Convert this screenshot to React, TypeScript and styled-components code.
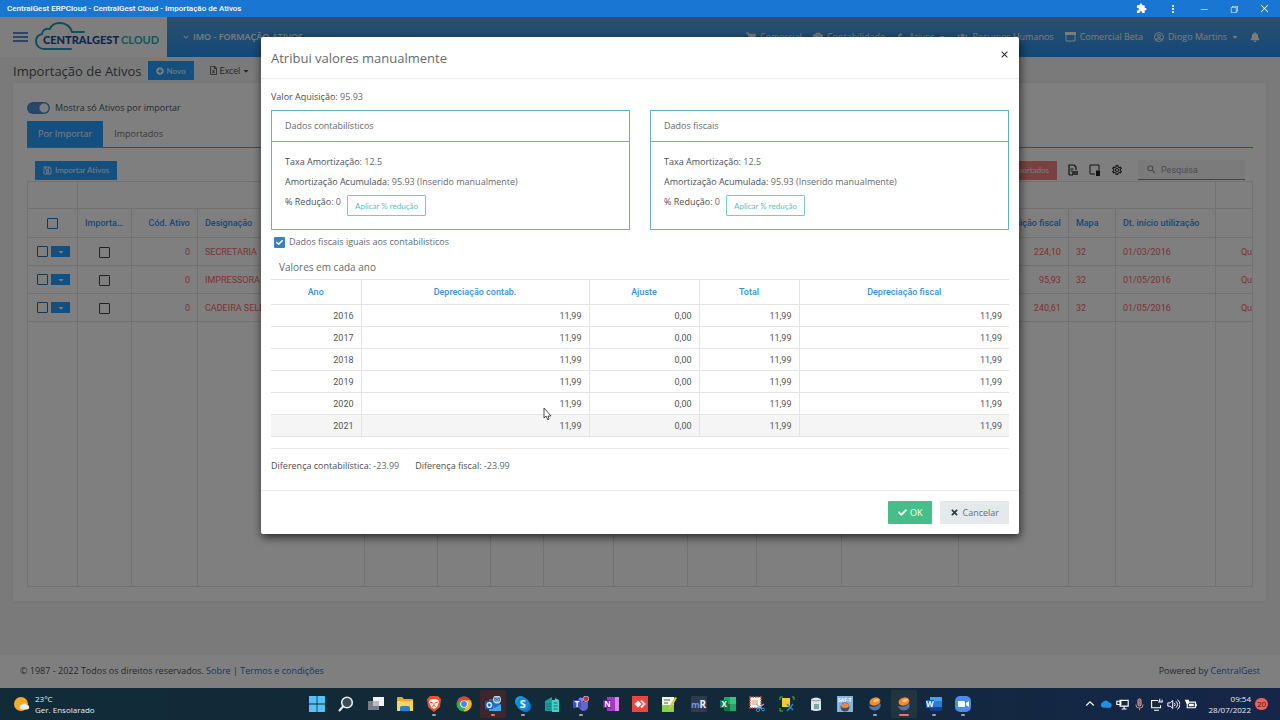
import React from "react";
import styled, { createGlobalStyle, css } from "styled-components";
import {
  FaBell, FaBriefcase, FaCaretDown, FaCheck, FaDollarSign, FaPlusCircle, FaRegFileExcel,
  FaRegSave, FaRegUserCircle, FaShoppingCart, FaTimes, FaUsers,
} from "react-icons/fa";
import { MdClose, MdExtension, MdMoreVert, MdOutlineSettings, MdSearch, MdExpandMore } from "react-icons/md";
import { VscChromeClose, VscChromeMinimize, VscChromeRestore } from "react-icons/vsc";

const brand = "'Open Sans', 'Noto Sans', sans-serif";
const compact = "Lato, 'Liberation Sans', sans-serif";
const grid = "Roboto, 'Liberation Sans', sans-serif";
const system = "'Open Sans', 'Noto Sans', sans-serif";

const Global = createGlobalStyle`
  *, *::before, *::after { box-sizing: border-box; }
  body { margin: 0; font: 400 9px/14px ${brand}; color: #4d5459; }
  button, input { font: inherit; margin: 0; }
  button { cursor: pointer; }
  a { text-decoration: none; }
  svg { display: block; flex: none; }
`;

const Desktop = styled.div`
  min-height: 100vh;
  display: flex;
  flex-direction: column;
`;

/* ---------- window title bar ---------- */
const TitleBar = styled.header`
  height: 17px;
  padding: 0 10px 0 7px;
  display: flex;
  align-items: center;
  justify-content: space-between;
  background: #1976d2;
  color: #fff;
  font: 500 8px/14px ${grid};
`;
const WindowButtons = styled.div`
  display: flex;
  align-items: center;
  gap: 20px;
`;
const PlainButton = styled.button`
  border: 0;
  padding: 0;
  background: none;
  color: inherit;
  display: flex;
  align-items: center;
  gap: 2px;
`;

/* ---------- application ---------- */
const WebArea = styled.div`
  position: relative;
  flex: 1;
  display: flex;
  flex-direction: column;
  background: #f5f5f5;
`;
const AppHeader = styled.header`
  height: 40px;
  display: flex;
  color: #f4f8fc;
`;
const BrandArea = styled.div`
  width: 167px;
  padding: 0 0 0 13px;
  display: flex;
  align-items: center;
  gap: 7px;
  background: #fdfdfd;
  color: #2465a8;
`;
const NavBar = styled.nav`
  flex: 1;
  padding: 0 20px 0 14px;
  display: flex;
  align-items: center;
  justify-content: space-between;
  background: linear-gradient(#5c9fdc, #2492f0);
`;
const Company = styled(PlainButton)`
  font-weight: 600;
`;
const NavLinks = styled.div`
  display: flex;
  align-items: center;
  gap: 11px;
`;
const NavLink = styled.a`
  display: flex;
  align-items: center;
  gap: 4px;
  color: inherit;
  white-space: nowrap;
`;
const Content = styled.main`
  flex: 1;
  padding: 1px 14px 0 13px;
`;
const PageHead = styled.div`
  display: flex;
  align-items: center;
  gap: 6px;
  height: 25px;
`;
const PageTitle = styled.h1`
  margin: 0;
  font-size: 13px;
  line-height: 20px;
  font-weight: 400;
`;
const BlueButton = styled.button<{ $tone?: string }>`
  height: 19px;
  padding: 0 8px;
  border: 0;
  display: inline-flex;
  align-items: center;
  gap: 3px;
  background: ${(p) => p.$tone ?? "#26a0ff"};
  color: #f4f8fc;
  font-family: ${compact};
  font-size: 8px;
`;
const ExcelButton = styled(PlainButton)`
  margin-left: 9px;
  font-family: ${compact};
`;
const Card = styled.section`
  padding: 18px 13px 14px 14px;
  background: #fff;
  box-shadow: 0 0 6px rgba(0, 0, 0, 0.06);
`;
const SwitchLabel = styled.label`
  display: flex;
  align-items: center;
  gap: 5px;
`;
const Switch = styled.input`
  appearance: none;
  width: 23px;
  height: 12px;
  border-radius: 6px;
  background: radial-gradient(circle at 17px 6px, #fff 4px, #4c8cd8 5px);
`;
const Tabs = styled.div`
  margin-top: 6px;
  display: flex;
  border-bottom: 1px solid #50a4ea;
`;
const Tab = styled.button<{ $active?: boolean }>`
  height: 26px;
  padding: 0 11px;
  border: 0;
  background: ${(p) => (p.$active ? "#26a0ff" : "transparent")};
  color: ${(p) => (p.$active ? "#f4f8fc" : "#70767a")};
`;
const GridTools = styled.div`
  margin-top: 11px;
  padding: 0 8px;
  display: flex;
  align-items: center;
  justify-content: space-between;
  height: 22px;
  color: #202020;
`;
const ToolGroup = styled.div`
  display: flex;
  align-items: center;
  gap: 10px;
`;
const Search = styled.label`
  width: 107px;
  height: 20px;
  margin-left: 5px;
  padding: 0 8px;
  display: flex;
  align-items: center;
  gap: 4px;
  background: #f7f7f7;
  border-bottom: 1px solid #888;
  color: #777;
  input {
    min-width: 0;
    width: 100%;
    border: 0;
    padding: 0;
    background: none;
    font-family: ${grid};
  }
  input::placeholder { color: #999; opacity: 1; }
`;
const AssetTable = styled.table`
  width: 100%;
  table-layout: fixed;
  border-collapse: collapse;
  border: 1px solid #e4e4e4;
  font: 400 9px/12px ${grid};
  color: #ff6464;
  th, td {
    height: 28px;
    padding: 0 7px;
    border: 1px solid #e4e4e4;
    overflow: hidden;
    white-space: nowrap;
    text-align: left;
  }
  th { height: 29px; color: #3c8ee4; font-weight: 500; }
  thead tr:first-child th { height: 27px; }
  tbody tr:last-child td { height: 265px; }
`;
const AssetCell = styled.td<{ $align?: string }>`
  && { text-align: ${(p) => p.$align ?? "left"}; }
`;
const QuotaCell = styled.td`
  && { padding: 0 0 0 25px; }
`;
const AssetHead = styled.th<{ $align?: string }>`
  && { text-align: ${(p) => p.$align ?? "left"}; text-overflow: ellipsis; }
`;
const Tick = styled.input<{ $tone?: string }>`
  appearance: none;
  width: 11px;
  height: 11px;
  border: 1px solid ${(p) => p.$tone ?? "#444"};
  border-radius: 1px;
  vertical-align: middle;
`;
const RowActions = styled.div`
  display: flex;
  align-items: center;
  justify-content: flex-end;
  gap: 3px;
`;
const DropButton = styled(BlueButton)`
  width: 19px;
  height: 11px;
  padding: 0;
  justify-content: center;
`;
const AppFooter = styled.footer`
  height: 33px;
  padding: 0 20px 2px;
  display: flex;
  align-items: center;
  justify-content: space-between;
  background: #fff;
  a { color: #2f6fc0; }
`;

/* ---------- dialog ---------- */
const Backdrop = styled.div`
  position: absolute;
  inset: 0;
  padding-top: 20px;
  display: flex;
  align-items: flex-start;
  justify-content: center;
  background: rgba(0, 0, 0, 0.5);
`;
const Dialog = styled.section`
  position: relative;
  width: 100%;
  max-width: 758px;
  background: #fff;
  border-radius: 2px;
  box-shadow: 1px 3px 10px rgba(0, 0, 0, 0.7);
  color: #646a6e;
`;
const DialogHead = styled.div`
  height: 42px;
  padding: 0 10px;
  display: flex;
  align-items: center;
  justify-content: space-between;
  border-bottom: 1px solid #ececec;
`;
const DialogTitle = styled.h2`
  margin: 0;
  font-size: 13px;
  line-height: 20px;
  font-weight: 400;
`;
const CloseButton = styled(PlainButton)`
  align-self: flex-start;
  margin: 12px -1px 0 0;
  color: #222;
`;
const DialogBody = styled.div`
  padding: 11px 10px 17px;
`;
const Line = styled.p`
  margin: 0;
  line-height: 14px;
  b { font-weight: 500; color: #4a5054; }
`;
const Panels = styled.div`
  margin-top: 6px;
  display: grid;
  grid-template-columns: 1fr 1fr;
  gap: 20px;
`;
const Panel = styled.section`
  height: 120px;
  border: 1px solid #62b3bd;
`;
const PanelTitle = styled.h3`
  margin: 0;
  height: 31px;
  padding: 0 13px;
  border-bottom: 1px solid #62b3bd;
  font-size: 9px;
  line-height: 30px;
  font-weight: 400;
`;
const PanelBody = styled.div`
  padding: 13px;
  display: grid;
  gap: 6px;
`;
const Reduction = styled.div`
  display: flex;
  gap: 6px;
`;
const OutlineButton = styled.button`
  height: 21px;
  padding: 0 7px;
  border: 1px solid #7cc7cc;
  border-radius: 1px;
  background: #fff;
  color: #62bcc2;
  font-family: ${compact};
  font-size: 8px;
  line-height: 12px;
`;
const SameLabel = styled.label`
  margin: 5px 0 0 3px;
  display: flex;
  align-items: center;
  gap: 4px;
`;
const CheckedBox = styled.input`
  appearance: none;
  width: 11px;
  height: 11px;
  border-radius: 1px;
  background: #3b82c0;
`;
const CheckHolder = styled.span`
  display: grid;
  > * { grid-area: 1 / 1; place-self: center; }
  svg { color: #fff; pointer-events: none; }
`;
const SectionTitle = styled.h3`
  margin: 10px 0 4px 8px;
  font-size: 10px;
  line-height: 16px;
  font-weight: 400;
`;
const YearTable = styled.table`
  width: 100%;
  table-layout: fixed;
  border-collapse: collapse;
  font: 400 9px/12px ${grid};
  color: #555;
  th, td {
    height: 22px;
    padding: 0 7px;
    border: 1px solid #e4e4e4;
    text-align: right;
  }
  th:first-child, td:first-child { border-left: 0; }
  th:last-child, td:last-child { border-right: 0; }
  th { height: 25px; text-align: center; color: #3790d4; font-weight: 500; }
  tbody tr:last-child { background: #f5f5f5; }
`;
const Differences = styled.div`
  margin-top: 11px;
  padding-top: 10px;
  border-top: 1px solid #e9e9e9;
  display: flex;
  gap: 16px;
`;
const DialogFoot = styled.div`
  padding: 10px;
  display: flex;
  justify-content: flex-end;
  gap: 8px;
  border-top: 1px solid #ececec;
`;
const FootButton = styled.button<{ $primary?: boolean }>`
  height: 23px;
  padding: 0 10px;
  border: 0;
  border-radius: 1px;
  display: flex;
  align-items: center;
  gap: 3px;
  ${(p) =>
    p.$primary
      ? css`background: #46be8a; color: #fff;`
      : css`background: #e4e9ec; color: #6a7074; svg { color: #33383b; }`}
`;
const Pointer = styled.svg`
  position: absolute;
  left: 282px;
  top: 370px;
`;

/* ---------- task bar ---------- */
const TaskBar = styled.footer`
  height: 32px;
  display: grid;
  grid-template-columns: 1fr 672px 1fr;
  align-items: center;
  background: linear-gradient(90deg, #122b38, #122939 60%, #15264a);
  color: #e6edf2;
  font: 400 8px/11px ${system};
`;
const Weather = styled.div`
  padding-left: 14px;
  display: flex;
  align-items: center;
  gap: 5px;
`;
const TaskIcons = styled.nav`
  display: flex;
  justify-content: space-between;
`;
const TaskButton = styled.button<{ $tint?: string; $mark?: string }>`
  width: 26px;
  height: 28px;
  padding: 0 0 2px;
  border: 0;
  border-radius: 2px;
  background: ${(p) => p.$tint ?? "transparent"};
  display: flex;
  flex-direction: column;
  align-items: center;
  justify-content: flex-end;
  gap: 2px;
  &::after {
    content: "";
    width: ${(p) => (p.$mark === "#f0706c" ? "10px" : "4px")};
    height: 2px;
    border-radius: 1px;
    background: ${(p) => p.$mark ?? "transparent"};
  }
`;
const Tray = styled.div`
  padding-right: 12px;
  display: flex;
  align-items: center;
  justify-content: flex-end;
  gap: 4px;
`;
const Clock = styled.time`
  margin-left: 8px;
  text-align: right;
`;
const Badge = styled.span`
  width: 13px;
  height: 12px;
  border-radius: 6px;
  background: #f0605c;
  color: #3a1a1c;
  font-size: 8px;
  line-height: 12px;
  text-align: center;
`;

const Logo = () => (
  <svg width="126" height="30" viewBox="0 0 126 30" role="img" aria-label="CentralGest Cloud">
    <path
      d="M49 10H37C36 5 31 1 25 1c-6 0-9 3-10 6C10 6 7 9 7 12 3 13 1 16 1 19c0 5 4 8 8 8h27"
      fill="none" stroke="#1a9fb5" strokeWidth="2" strokeLinejoin="round" strokeLinecap="round"
    />
    <text x="8" y="22" fontFamily="Lato" fontWeight="700" fontSize="11" fill="#174a9c">
      <tspan fontWeight="900">CENTRALGEST</tspan><tspan x="86" fill="#22b0b4">CLOUD</tspan>
    </text>
  </svg>
);

const Svg = ({ children, size = 16 }: { children: React.ReactNode; size?: number }) => (
  <svg width={size} height={size} viewBox="0 0 16 16" aria-hidden="true">{children}</svg>
);
const letter = (t: string, x: number, y: number, s = 8, fill = "#fff") => (
  <text x={x} y={y} fontSize={s} fontWeight="700" fontFamily="Open Sans" fill={fill}>{t}</text>
);
const fox = (
  <>
    <circle cx="7.500" cy="9" r="6" fill="#26374f" />
    <path d="M2 10c1 4 6 6 10 3 2-2 2-4 1-6-2 3-6 5-11 3z" fill="#5574a4" />
    <ellipse cx="8" cy="5.500" rx="5.500" ry="4" transform="rotate(-15 8 5.500)" fill="#f08a30" />
    <ellipse cx="9" cy="4.500" rx="3" ry="1.500" transform="rotate(-15 9 4.500)" fill="#ffc27a" />
  </>
);

const taskItems: { name: string; art: React.ReactNode; tint?: string; mark?: string }[] = [
  { name: "Iniciar", art: <path d="M0 0h7.600v7.600H0zM8.400 0H16v7.600H8.400zM0 8.400h7.600V16H0zM8.400 8.400H16V16H8.400z" fill="#54c4f6" /> },
  { name: "Procurar", art: <><circle cx="9" cy="6.500" r="5.300" fill="#3a4c58" stroke="#e8eef2" strokeWidth="1.600" /><path d="M5 10.500L1.500 14.500" stroke="#e8eef2" strokeWidth="2" strokeLinecap="round" /></> },
  { name: "Vista de tarefas", art: <><path d="M0 5h11v9H0z" fill="#777e84" /><path d="M5 1h11v9H5z" fill="#f2f2f2" /><path d="M5 5h6v5H5z" fill="#b9bdc0" /></> },
  { name: "Explorador", art: <><path d="M0 2q0-1 1-1h4l2 2h8q1 0 1 1v11H0z" fill="#e9a92c" /><path d="M0 5h16v9q0 1-1 1H1q-1 0-1-1z" fill="#fdd45c" /><path d="M3 15v-3q0-2 2-2h6q2 0 2 2v3z" fill="#2b7fd0" /></> },
  { name: "Brave", mark: "#9aa5ad", art: <><path d="M4 0h8l3 3-1 8-6 5-6-5-1-8z" fill="#f0502c" /><path d="M4 4l2-1h4l2 1 1 2-2 5-3 2-3-2-2-5z" fill="#fff" /><path d="M4 6l3 1M12 6L9 7M8 7v3M6 10.500l2-1 2 1" fill="none" stroke="#f0502c" /></> },
  { name: "Chrome", art: <><circle cx="8" cy="8" r="7.500" fill="#36a852" /><path d="M8 8L1.500 4.200A7.500 7.500 0 0 1 14.500 4.200z" fill="#e94235" /><path d="M14.600 4.300A7.500 7.500 0 0 1 8 15.500L10.500 8V4.300z" fill="#fbbc05" /><circle cx="8" cy="8" r="3.800" fill="#fff" /><circle cx="8" cy="8" r="2.900" fill="#4285f4" /></> },
  { name: "Outlook", tint: "#40262b", mark: "#e07a72", art: <><path d="M4 3h11v12H4z" fill="#1c72c0" /><path d="M4 8l6 4 6-4v7H4z" fill="#43a8ea" /><path d="M0 5h8v8H0z" fill="#0f5cab" />{letter("O", 1, 12)}<circle cx="12" cy="3.500" r="4" fill="#bfe0f4" /><path d="M9.700 2h4.600v3H9.700zl2.300 2 2.300-2" fill="none" stroke="#1b4f7c" strokeWidth=".8" /></> },
  { name: "Skype", mark: "#9aa5ad", art: <><circle cx="5.500" cy="5.500" r="5.500" fill="#1a9be6" /><circle cx="10.500" cy="10.500" r="5.500" fill="#0a78cc" /><circle cx="8" cy="8" r="6.500" fill="#128ada" />{letter("S", 4.800, 12, 11)}</> },
  { name: "CentralGest", art: <><path d="M1 5l7-4v14H1z" fill="#17a3a0" /><path d="M8 4h3V2l4 2v12H8z" fill="#48d0c4" /><path d="M2 8h5M2 10.500h5M2 13h5M9.500 7h4M9.500 10h4M9.500 13h4" stroke="#136d78" /></> },
  { name: "Teams", mark: "#9aa5ad", art: <><circle cx="8" cy="4" r="2.500" fill="#7b83eb" /><path d="M6 6h9v5q-1 4-5 4-4-1-4-5z" fill="#6068c8" /><path d="M0 4h8v8H0z" fill="#464eb8" />{letter("T", 1.800, 11)}<circle cx="13" cy="2.800" r="2.800" fill="#c4314b" stroke="#e9e9e9" strokeWidth=".6" /></> },
  { name: "OneNote", art: <><path d="M4 1h12v14H4z" fill="#a43ac4" /><path d="M12 1h4v14h-4z" fill="#d58ae8" /><path d="M0 4h8v8H0z" fill="#7719aa" />{letter("N", 1.200, 11)}</> },
  { name: "AnyDesk", art: <><path d="M0 0h16v16H0z" fill="#ef443b" /><path d="M6 4.500L9.500 8 6 11.500 2.500 8z" fill="#fff" /><path d="M9 4.500L12.500 8 9 11.500" fill="none" stroke="#fff" strokeWidth="1.800" /></> },
  { name: "Notepad++", art: <><path d="M1 1h12v15H1z" fill="#f3f6e8" /><path d="M1 9h12v7H1z" fill="#8ad04a" /><path d="M3 4h6M3 7h4" stroke="#4a6a3a" /><path d="M8 11l6-10 2 1-6 10-2 1z" fill="#d7c83a" /></> },
  { name: "mRemote", art: <><path d="M0 0h16v16H0z" fill="#303a48" />{letter("m", 0, 11.500, 9, "#7c92e0")}{letter("R", 8.500, 11.500, 10, "#eef")}</> },
  { name: "Excel", art: <><path d="M4 1h12v14H4z" fill="#22a565" /><path d="M10 1h6v7h-6z" fill="#35c481" /><path d="M4 8h6v7H4z" fill="#17703f" /><path d="M0 4h8v8H0z" fill="#107c41" />{letter("X", 1.500, 11)}</> },
  { name: "Recortes", art: <><path d="M1 1h11v11H1z" fill="#f7f3f2" stroke="#d84b3c" strokeWidth="1.500" strokeDasharray="1.500 1" /><path d="M3 4h6v5H3z" fill="#e8c6c0" /><path d="M7 8l6 5M15 8l-6 4" stroke="#86b8d8" strokeWidth="1.200" /><circle cx="9" cy="14" r="1.600" fill="none" stroke="#3d94d0" /><circle cx="14" cy="13.500" r="1.400" fill="none" stroke="#3d94d0" /></> },
  { name: "Dados", art: <><path d="M3 2h8v9H3z" fill="#f6c934" /><path d="M1 4V1h3M13 1h2v3M1 12v3h3" fill="none" stroke="#58b04c" /><path d="M8 8l6 6M14 8l-6 7" stroke="#2f86cc" strokeWidth="1.500" /></> },
  { name: "Base de dados", art: <><path d="M3 3q5-3 10 0v11q-5 2-10 0z" fill="#dfe5e6" /><path d="M3 4q5 2 10 0" fill="none" stroke="#8a999e" /><path d="M6 8h5v5H6z" fill="#6fa9a8" /></> },
  { name: "SAF-T", art: <><path d="M0 0h16v16H0z" fill="#86b4de" />{letter("SAF-T", 1, 5.500, 5)}<circle cx="8" cy="11" r="4.500" fill="#3c506c" /><ellipse cx="8" cy="9.500" rx="4" ry="2.500" fill="#e88a44" /></> },
  { name: "ERP", mark: "#9aa5ad", art: fox },
  { name: "ERPCloud", tint: "#22343f", mark: "#f0706c", art: fox },
  { name: "Word", mark: "#9aa5ad", art: <><path d="M4 1h12v14H4z" fill="#2b7cd3" /><path d="M4 1h12v4H4z" fill="#41a5ee" /><path d="M4 11h12v4H4z" fill="#103f91" /><path d="M0 4h8v8H0z" fill="#185abd" />{letter("W", 0, 11)}</> },
  { name: "Zoom", mark: "#9aa5ad", art: <><rect width="16" height="16" rx="5" fill="#4a8cf0" /><path d="M3 5h6q1 0 1 1v5H4q-1 0-1-1zM11 7l3-2v6l-3-2z" fill="#fff" /></> },
];

const columns = [50, 54, 66, 167, 73, 53, 53, 70, 74, 69, 85, 117, 110, 47, 100, 37];
const assets = [
  ["SECRETARIA", "224,10", "01/03/2016"],
  ["IMPRESSORA", "95,93", "01/05/2016"],
  ["CADEIRA SELECT", "240,61", "01/05/2016"],
];
const blanks = (n: number) => Array.from({ length: n }, (_, i) => i);

const AssetsGrid = () => (
  <AssetTable>
    <colgroup>{columns.map((w, i) => <col key={i} width={`${(w / 1225) * 100}%`} />)}</colgroup>
    <thead>
      <tr><th /><th colSpan={14} /><th /></tr>
      <tr>
        <AssetHead $align="center"><Tick type="checkbox" aria-label="Selecionar todos" $tone="#2c6ca8" /></AssetHead>
        <AssetHead>Importado</AssetHead>
        <AssetHead $align="right">Cód. Ativo</AssetHead>
        <AssetHead>Designação</AssetHead>
        {blanks(8).map((i) => <th key={i} />)}
        <AssetHead $align="right">Aquisição fiscal</AssetHead>
        <AssetHead>Mapa</AssetHead>
        <AssetHead>Dt. início utilização</AssetHead>
        <th />
      </tr>
    </thead>
    <tbody>
      {assets.map(([name, value, date]) => (
        <tr key={name}>
          <td>
            <RowActions>
              <Tick type="checkbox" aria-label={`Selecionar ${name}`} $tone="#2c6ca8" />
              <DropButton aria-label={`Ações ${name}`}><FaCaretDown size={8} /></DropButton>
            </RowActions>
          </td>
          <AssetCell $align="center"><Tick type="checkbox" aria-label={`Importar ${name}`} /></AssetCell>
          <AssetCell $align="right">0</AssetCell>
          <td>{name}</td>
          {blanks(8).map((i) => <td key={i} />)}
          <AssetCell $align="right">{value}</AssetCell>
          <td>32</td>
          <td>{date}</td>
          <QuotaCell>Qu</QuotaCell>
        </tr>
      ))}
      <tr>{columns.map((_, i) => <td key={i} />)}</tr>
    </tbody>
  </AssetTable>
);

const DataPanel = ({ title }: { title: string }) => (
  <Panel>
    <PanelTitle>{title}</PanelTitle>
    <PanelBody>
      <Line><b>Taxa Amortização:</b> 12.5</Line>
      <Line><b>Amortização Acumulada:</b> 95.93 (Inserido manualmente)</Line>
      <Reduction>
        <Line><b>% Redução:</b> 0</Line>
        <OutlineButton>Aplicar % redução</OutlineButton>
      </Reduction>
    </PanelBody>
  </Panel>
);

const ValuesDialog = () => (
  <Dialog role="dialog" aria-labelledby="dialog-title">
    <DialogHead>
      <DialogTitle id="dialog-title">Atribui valores manualmente</DialogTitle>
      <CloseButton aria-label="Fechar"><MdClose size={11} /></CloseButton>
    </DialogHead>
    <DialogBody>
      <Line><b>Valor Aquisição:</b> 95.93</Line>
      <Panels>
        <DataPanel title="Dados contabilísticos" />
        <DataPanel title="Dados fiscais" />
      </Panels>
      <SameLabel>
        <CheckHolder>
          <CheckedBox type="checkbox" defaultChecked />
          <FaCheck size={7} />
        </CheckHolder>
        Dados fiscais iguais aos contabilisticos
      </SameLabel>
      <SectionTitle>Valores em cada ano</SectionTitle>
      <YearTable>
        <colgroup>{[90, 228, 110, 100, 210].map((w) => <col key={w} width={`${(w / 738) * 100}%`} />)}</colgroup>
        <thead>
          <tr><th>Ano</th><th>Depreciação contab.</th><th>Ajuste</th><th>Total</th><th>Depreciação fiscal</th></tr>
        </thead>
        <tbody>
          {[2016, 2017, 2018, 2019, 2020, 2021].map((year) => (
            <tr key={year}><td>{year}</td><td>11,99</td><td>0,00</td><td>11,99</td><td>11,99</td></tr>
          ))}
        </tbody>
      </YearTable>
      <Differences>
        <Line><b>Diferença contabilística:</b> -23.99</Line>
        <Line><b>Diferença fiscal:</b> -23.99</Line>
      </Differences>
    </DialogBody>
    <DialogFoot>
      <FootButton $primary><FaCheck size={9} />OK</FootButton>
      <FootButton><FaTimes size={9} />Cancelar</FootButton>
    </DialogFoot>
    <Pointer width="9" height="14" viewBox="0 0 9 14" aria-hidden="true">
      <path d="M1 1v10l2-2 2 4 1-1-1-3h3z" fill="#fff" stroke="#222" strokeWidth="0.800" />
    </Pointer>
  </Dialog>
);

export default function App() {
  return (
    <Desktop>
      <Global />
      <TitleBar>
        <span>CentralGest ERPCloud - CentralGest Cloud - Importação de Ativos</span>
        <WindowButtons>
          <PlainButton aria-label="Extensões"><MdExtension size={11} /></PlainButton>
          <PlainButton aria-label="Mais"><MdMoreVert size={12} /></PlainButton>
          <PlainButton aria-label="Minimizar"><VscChromeMinimize size={10} /></PlainButton>
          <PlainButton aria-label="Restaurar"><VscChromeRestore size={10} /></PlainButton>
          <PlainButton aria-label="Fechar janela"><VscChromeClose size={11} /></PlainButton>
        </WindowButtons>
      </TitleBar>

      <WebArea>
        <AppHeader>
          <BrandArea>
            <PlainButton aria-label="Menu">
              <svg width="15" height="12" viewBox="0 0 15 12"><path d="M0 2h15M0 6h15M0 10h15" stroke="currentColor" strokeWidth="1.500" /></svg>
            </PlainButton>
            <Logo />
          </BrandArea>
          <NavBar>
            <Company><MdExpandMore size={10} />IMO - FORMAÇÃO ATIVOS</Company>
            <NavLinks>
              <NavLink href="#comercial"><FaShoppingCart size={10} />Comercial</NavLink>
              <NavLink href="#contabilidade"><FaBriefcase size={10} />Contabilidade</NavLink>
              <NavLink href="#ativos"><FaDollarSign size={9} />Ativos<FaCaretDown size={8} /></NavLink>
              <NavLink href="#rh"><FaUsers size={11} />Recursos Humanos</NavLink>
              <NavLink href="#beta">
                <svg width="11" height="10" viewBox="0 0 11 10"><path d="M1 1h9v8H1z" fill="none" stroke="currentColor" /><path d="M0 0h11v3H0z" fill="currentColor" /></svg>
                Comercial Beta
              </NavLink>
              <NavLink href="#perfil"><FaRegUserCircle size={10} />Diogo Martins<FaCaretDown size={8} /></NavLink>
              <NavLink href="#avisos" aria-label="Avisos"><FaBell size={10} /></NavLink>
            </NavLinks>
          </NavBar>
        </AppHeader>

        <Content>
          <PageHead>
            <PageTitle>Importação de Ativos</PageTitle>
            <BlueButton><FaPlusCircle size={8} />Novo</BlueButton>
            <ExcelButton><FaRegFileExcel size={9} />Excel<FaCaretDown size={8} /></ExcelButton>
          </PageHead>
          <Card>
            <SwitchLabel><Switch type="checkbox" role="switch" defaultChecked />Mostra só Ativos por importar</SwitchLabel>
            <Tabs role="tablist">
              <Tab role="tab" $active>Por Importar</Tab>
              <Tab role="tab">Importados</Tab>
            </Tabs>
            <GridTools>
              <BlueButton><FaRegSave size={9} />Importar Ativos</BlueButton>
              <ToolGroup>
                <BlueButton $tone="#f08484">Eliminar importados</BlueButton>
                <PlainButton aria-label="Exportar">
                  <svg width="12" height="12" viewBox="0 0 12 12"><path d="M2 11V1h5l2 2v3M2 11h4M3.500 5h3M3.500 7h2" fill="none" stroke="currentColor" strokeWidth="1.200" /><path d="M5 7h6v4H5z" fill="currentColor" opacity=".7" /></svg>
                </PlainButton>
                <PlainButton aria-label="Colunas">
                  <svg width="12" height="12" viewBox="0 0 12 12"><path d="M6 10H1V1h9v5" fill="none" stroke="currentColor" /><path d="M7 6.500h4V12H7z" fill="currentColor" /></svg>
                </PlainButton>
                <PlainButton aria-label="Definições"><MdOutlineSettings size={12} /></PlainButton>
                <Search><MdSearch size={11} /><input aria-label="Pesquisa" placeholder="Pesquisa" /></Search>
              </ToolGroup>
            </GridTools>
            <AssetsGrid />
          </Card>
        </Content>

        <AppFooter>
          <span>© 1987 - 2022 Todos os direitos reservados. <a href="#sobre">Sobre</a> | <a href="#termos">Termos e condições</a></span>
          <span>Powered by <a href="#centralgest">CentralGest</a></span>
        </AppFooter>

        <Backdrop><ValuesDialog /></Backdrop>
      </WebArea>

      <TaskBar>
        <Weather>
          <Svg><circle cx="7" cy="8" r="7" fill="#f8a824" /><path d="M8 13.500a2.500 2.500 0 0 1 0-5 3 3 0 0 1 5 .5 2 2 0 0 1 0 4.500z" fill="#eaf0f6" /></Svg>
          <div>23°C<br />Ger. Ensolarado</div>
        </Weather>
        <TaskIcons>
          {taskItems.map((t) => (
            <TaskButton key={t.name} aria-label={t.name} $tint={t.tint} $mark={t.mark}><Svg>{t.art}</Svg></TaskButton>
          ))}
        </TaskIcons>
        <Tray>
          <Svg size={12}><path d="M3 10l5-5 5 5" fill="none" stroke="#fff" strokeWidth="1.500" /></Svg>
          <Svg size={12}><path d="M4 13a4 4 0 0 1-.5-7.500A5 5 0 0 1 12 6a3.500 3.500 0 0 1 0 7z" fill="#1f8fe0" /></Svg>
          <Svg size={13}><path d="M5 3h10v7H5zM10 10v3M7 13.500h6M1 4h5v4H1z" fill="none" stroke="#fff" strokeWidth="1.400" /></Svg>
          <Svg size={13}><rect x="6" y="1" width="4" height="9" rx="2" fill="#8c6b70" stroke="#e0a8a4" /><path d="M3.500 8a4.500 4.500 0 0 0 9 0M8 12.500V15" fill="none" stroke="#e0a8a4" /></Svg>
          <Svg size={13}><path d="M10 3H2v9h11V9M5 15h6M12 1v4M10 5h5V2" fill="none" stroke="#fff" strokeWidth="1.300" /></Svg>
          <Svg size={13}><path d="M1 6h3l3-3v10l-3-3H1zM9 6q2 2 0 4M11 4q4 4 0 8M13 2q6 6 0 12" fill="none" stroke="#fff" strokeWidth="1.200" /></Svg>
          <Svg size={13}><path d="M4 5h10v7H4zM15 7v3" fill="none" stroke="#fff" strokeWidth="1.400" /><path d="M6 7h6v3H6zM1 2h5v5H3z" fill="#fff" /></Svg>
          <Clock>09:54<br />28/07/2022</Clock>
          <Badge>20</Badge>
        </Tray>
      </TaskBar>
    </Desktop>
  );
}
